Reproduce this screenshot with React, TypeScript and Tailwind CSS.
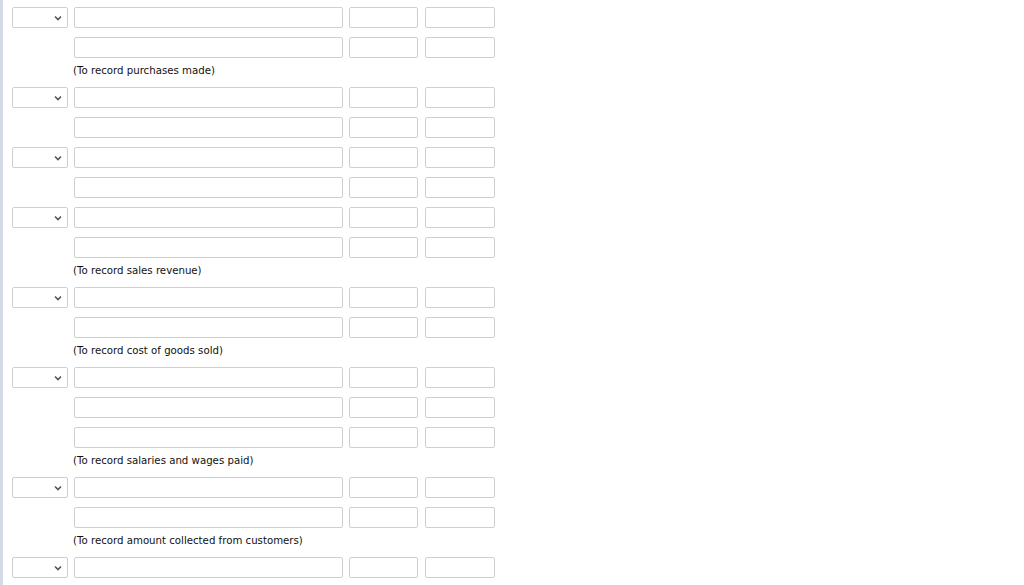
import React from "react";

type Item = { kind: "row"; select: boolean } | { kind: "text"; label: string };

const items: Item[] = [
  { kind: "row", select: true },
  { kind: "row", select: false },
  { kind: "text", label: "(To record purchases made)" },
  { kind: "row", select: true },
  { kind: "row", select: false },
  { kind: "row", select: true },
  { kind: "row", select: false },
  { kind: "row", select: true },
  { kind: "row", select: false },
  { kind: "text", label: "(To record sales revenue)" },
  { kind: "row", select: true },
  { kind: "row", select: false },
  { kind: "text", label: "(To record cost of goods sold)" },
  { kind: "row", select: true },
  { kind: "row", select: false },
  { kind: "row", select: false },
  { kind: "text", label: "(To record salaries and wages paid)" },
  { kind: "row", select: true },
  { kind: "row", select: false },
  { kind: "text", label: "(To record amount collected from customers)" },
  { kind: "row", select: true },
];

function Select() {
  return (
    <div className="relative w-[56px] h-[21px] border border-[#cfcfcf] rounded-[2px] bg-white">
      <svg
        className="absolute right-[5px] top-[7px]"
        width="8"
        height="6"
        viewBox="0 0 8 6"
      >
        <path d="M1 1.5 L4 4.5 L7 1.5" fill="none" stroke="#555" strokeWidth="1.6" />
      </svg>
    </div>
  );
}

function Row({ select }: { select: boolean }) {
  return (
    <div className="flex h-[21px] mb-[9px]">
      {select ? <Select /> : <div className="w-[56px]" />}
      <div className="ml-[6px] w-[269px] h-[21px] border border-[#cfcfcf] rounded-[2px] bg-white" />
      <div className="ml-[6px] w-[69px] h-[21px] border border-[#cfcfcf] rounded-[2px] bg-white" />
      <div className="ml-[7px] w-[70px] h-[21px] border border-[#cfcfcf] rounded-[2px] bg-white" />
    </div>
  );
}

export default function App() {
  return (
    <div className="flex h-[585px] w-[1024px] overflow-hidden bg-white">
      <div className="w-[3px] h-full bg-[#d3dae5]" />
      <div
        className="pl-[9px] pt-[7px] text-[10.2px] text-[#111]"
        style={{ fontFamily: '"DejaVu Sans", Verdana, sans-serif' }}
      >
        {items.map((it, i) =>
          it.kind === "row" ? (
            <Row key={i} select={it.select} />
          ) : (
            <div key={i} className="ml-[61px] -mt-[3px] h-[14px] leading-[14px] mb-[9px]">
              {it.label}
            </div>
          )
        )}
      </div>
    </div>
  );
}
